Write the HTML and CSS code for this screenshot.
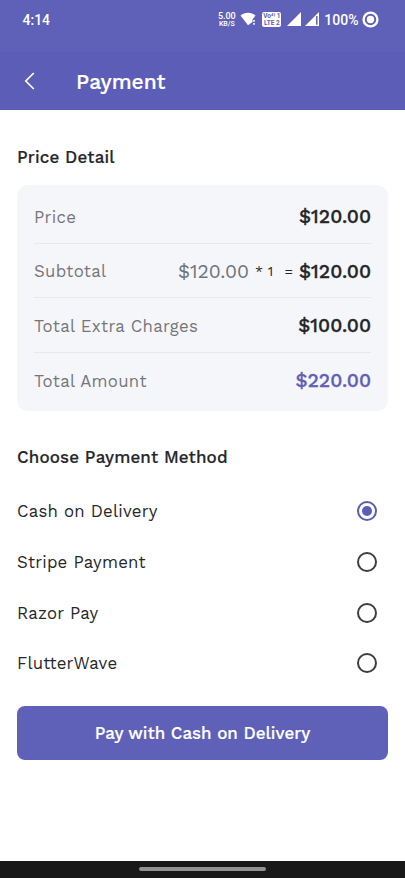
FILE: index.html
```html
<!DOCTYPE html>
<html lang="en">
<head>
<meta charset="utf-8">
<title>Payment</title>
<link rel="stylesheet" href="styles.css">
</head>
<body>
<div class="screen">
  <header class="top">
    <div class="status">
      <span class="clock">4:14</span>
      <span class="speed"><span class="rate">5.00</span><span class="unit">KB/S</span></span>
      <svg class="wifi" width="17" height="14" viewBox="0 0 17 14"><path d="M0.5 3.6C4.8-.2 11.2-.2 15.5 3.6L12.5 7.4V10L8 13.2Z" fill="#fff"/><path d="M14 8v1.8M14 11v1.8" stroke="#fff" stroke-width="1.6"/></svg>
      <span class="volte"><span>Vo⁴⁾ 1</span><span>LTE 2</span></span>
      <svg class="signal" width="14" height="14" viewBox="0 0 14 14"><path d="M14 0V14H0Z" fill="#fff"/></svg>
      <svg class="signal second" width="14" height="14" viewBox="0 0 14 14"><path d="M14 0V14H0Z" fill="#fff"/><path d="M11.8 4V12.8" stroke="#5e60b8" stroke-width="1.5"/></svg>
      <span class="percent">100%</span>
      <svg class="battery" width="17" height="17" viewBox="0 0 17 17"><circle cx="8.5" cy="8.5" r="6.9" fill="none" stroke="#fff" stroke-width="2.4"/><circle cx="8.5" cy="8.5" r="3.7" fill="#fff"/></svg>
    </div>
    <div class="appbar">
      <svg class="back" width="12" height="20" viewBox="0 0 12 20"><path d="M9.8 2L1.8 10L9.8 18" fill="none" stroke="#fff" stroke-width="1.7"/></svg>
      <h1 class="title">Payment</h1>
    </div>
  </header>
  <main class="content">
    <h2 class="heading detail">Price Detail</h2>
    <section class="card">
      <div class="row"><span class="label price">Price</span><span class="amount">$120.00</span></div>
      <div class="row"><span class="label subtotal">Subtotal</span><span class="sum"><span class="unit-price">$120.00</span><span class="times">* 1</span><span class="equals">=</span><span class="amount">$120.00</span></span></div>
      <div class="row"><span class="label extra">Total Extra Charges</span><span class="amount hundred">$100.00</span></div>
      <div class="row"><span class="label total">Total Amount</span><span class="amount due">$220.00</span></div>
    </section>
    <h2 class="heading method">Choose Payment Method</h2>
    <div class="options">
      <div class="option"><span class="cash">Cash on Delivery</span><span class="radio on"></span></div>
      <div class="option"><span class="stripe">Stripe Payment</span><span class="radio"></span></div>
      <div class="option"><span class="razor">Razor Pay</span><span class="radio"></span></div>
      <div class="option"><span class="flutter">FlutterWave</span><span class="radio"></span></div>
    </div>
    <button class="pay">Pay with Cash on Delivery</button>
  </main>
  <footer class="nav"><span class="handle"></span></footer>
</div>
</body>
</html>
```

FILE: styles.css
```css
* { box-sizing: border-box; }
body { margin: 0; font-family: "Work Sans", Inter, sans-serif; color: #26272b; background: #fff; }
.screen { width: 405px; height: 878px; display: flex; flex-direction: column; overflow: hidden; }
.top { height: 110.4px; background: #5c5db6; color: #fff; }
.status { height: 52px; padding: 0 26px 13px 22.5px; display: flex; align-items: center; background: #5f61b9; font-family: Roboto, sans-serif; }
.clock { font-size: 14px; font-weight: 500; margin-right: auto; }
.speed { width: 19px; display: flex; flex-direction: column; align-items: center; font-weight: 500; margin: 0 4px 0 0; }
.rate { font-size: 9px; line-height: 9px; }
.unit { font-size: 7px; line-height: 6px; }
.wifi { margin: -1px 5px 0 0; }
.volte { width: 19px; height: 15px; margin-top: -1px; padding-top: 1px; border-radius: 2px; background: #fff; color: #5f61b9; display: flex; flex-direction: column; justify-content: center; align-items: center; font-size: 6.5px; line-height: 7px; font-weight: 700; white-space: nowrap; margin-right: 6px; }
.signal { margin-top: -1px; }
.second { margin: -1px 5.5px 0 3.5px; }
.percent { font-size: 14px; font-weight: 500; margin-right: 3.5px; }
.appbar { height: 58px; display: flex; align-items: center; padding-left: 24px; }
.title { margin: 2px 0 0 40px; font-size: 21px; font-weight: 500; line-height: 24px; -webkit-text-stroke: .2px; }
.content { flex: 1; padding: 35.6px 17px 0; }
.heading { margin: 0; font-size: 17px; line-height: 22px; font-weight: 500; letter-spacing: .14px; -webkit-text-stroke: .15px; }
.card { margin-top: 17.4px; height: 226px; padding: 4px 17px; background: #f5f6f9; border-radius: 11px; display: flex; flex-direction: column; }
.row { height: 54.7px; padding-top: 1px; display: flex; justify-content: space-between; align-items: center; border-bottom: 1px solid #e8e9ec; }
.row:last-child { border: 0; }
.label { font-size: 16.8px; color: #75767b; letter-spacing: .3px; }
.amount { font-size: 19.3px; font-weight: 500; color: #25262a; -webkit-text-stroke: .3px; }
.due { color: #5f60b5; }
.sum { display: flex; align-items: center; }
.unit-price { font-size: 19.3px; color: #6c757d; }
.times { font-size: 14px; margin-left: 6px; letter-spacing: .2px; }
.equals { font-size: 14px; margin: 0 6px 0 11px; }
.method { margin-top: 35px; }
.options { margin-top: 17.7px; }
.option { height: 50.7px; padding: 0 11px 0 0; display: flex; align-items: center; justify-content: space-between; font-size: 16.8px; letter-spacing: .2px; }
.radio { width: 20px; height: 20px; border: 2px solid #3d3e42; border-radius: 50%; display: flex; align-items: center; justify-content: center; }
.on { border-color: #5c5db6; }
.on::after { content: ""; width: 10px; height: 10px; border-radius: 50%; background: #5c5db6; }
.pay { display: block; width: 100%; height: 54px; margin-top: 16.9px; border: 0; border-radius: 8px; background: #5f61b9; color: #fff; font: 500 17px "Work Sans", Inter, sans-serif; -webkit-text-stroke: .15px; }
.nav { height: 17px; background: #191919; display: flex; justify-content: center; align-items: center; }
.handle { width: 127px; height: 4px; margin-bottom: 1px; border-radius: 2px; background: #929292; }
```
